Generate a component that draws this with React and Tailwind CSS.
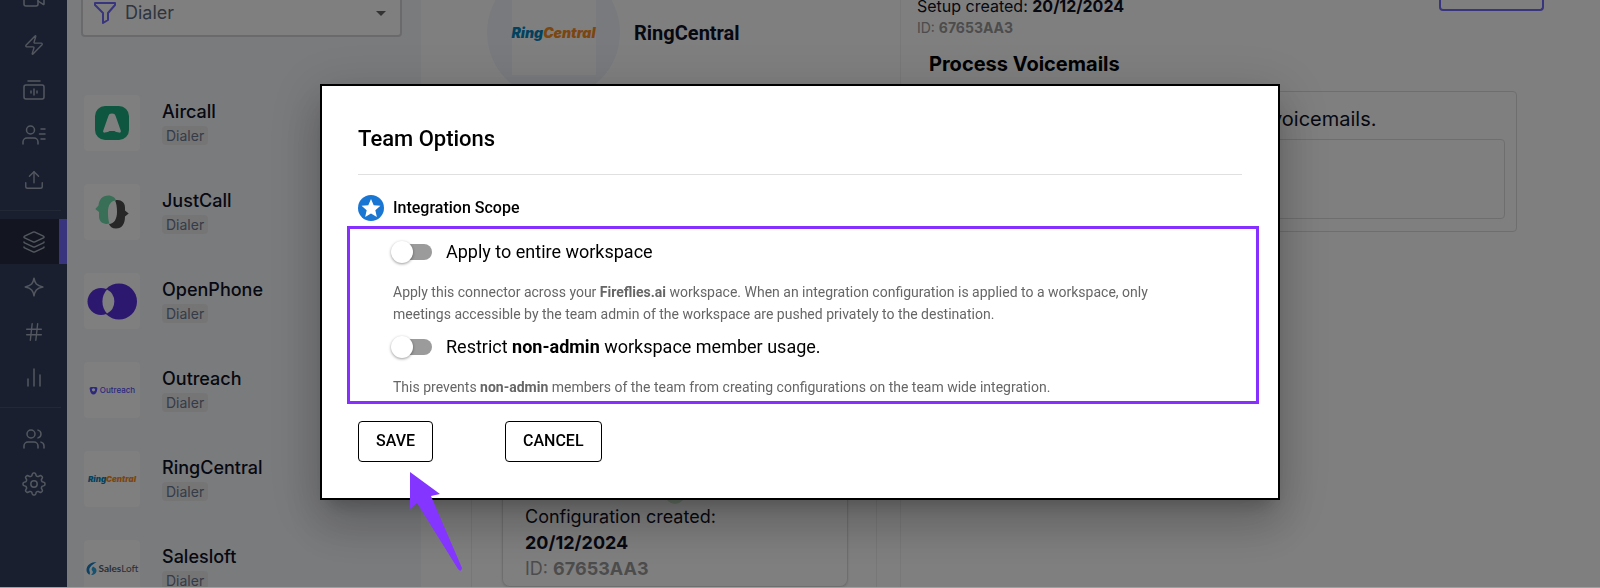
import { useState } from "react";
import { Zap, Upload, Layers, Hash, Users, Video } from "lucide-react";

const dialers = [
  { name: "Aircall", Logo: AircallLogo },
  { name: "JustCall", Logo: JustCallLogo },
  { name: "OpenPhone", Logo: OpenPhoneLogo },
  { name: "Outreach", Logo: OutreachLogo },
  { name: "RingCentral", Logo: RingCentralLogo },
  { name: "Salesloft", Logo: SalesLoftLogo },
];

function AircallLogo() {
  return (
    <svg viewBox="0 0 34 34" className="w-[34px]" aria-hidden="true">
      <rect width="34" height="34" rx="10" fill="#1eac80" />
      <path d="M17 7.500c-2.200 0-3 .8-3.600 2.500L8.300 24.500c-.6 1.600.4 2.400 1.600 2.100l2.600-.6c1-.2 1.600-.9 2.600-.9h3.800c1 0 1.600.7 2.600.9l2.600.6c1.200.3 2.200-.5 1.600-2.100L20.600 10c-.6-1.700-1.400-2.500-3.600-2.500z" fill="#fff" />
    </svg>
  );
}

function JustCallLogo() {
  return (
    <svg viewBox="0 0 34 34" className="w-[34px]" aria-hidden="true">
      <path d="M20 5.500c5-1.500 10 1.500 10 7v3l3.700 3-3.700 3C30 29 27 33.500 21 33.500c-4 0-6-2-7-4.500 5 0 8-5 8-12 0-5-.5-8.500-2-11.500z" fill="#4e4e4e" />
      <path d="M13 .5c4.500 0 7.500 2.500 8 5-5 0-8 4.500-8 11.500 0 5 .3 8.500 1.500 11.500-6 1.500-10.500-1.500-10.500-7V17L.3 14l3.200-3.500C4 4 8 .5 13 .5z" fill="#72dcae" />
    </svg>
  );
}

function OpenPhoneLogo() {
  return (
    <svg viewBox="0 0 50 37" className="w-[50px]" aria-hidden="true">
      <circle cx="14" cy="18.500" r="13.500" fill="#5b30e0" />
      <circle cx="32" cy="18.500" r="18" fill="#5b30e0" />
      <path d="M20 6.500a13.500 13.500 0 0 1 0 24 18 18 0 0 1 0-24z" fill="#fff" />
    </svg>
  );
}

function OutreachLogo() {
  return (
    <span className="flex items-center gap-[2px] text-[8px] font-medium text-[#5951ff]">
      <svg viewBox="0 0 10 10" className="w-[9px]" aria-hidden="true">
        <path d="M2.500 1h5C9 1 9.500 2 9.200 3.500 8.800 7 7 9.500 5 9.500S1.200 7 .8 3.500C.5 2 1 1 2.500 1z" fill="#5951ff" />
        <circle cx="5" cy="4.300" r="1.800" fill="#fff" />
      </svg>
      Outreach
    </span>
  );
}

function RingCentralLogo() {
  return (
    <span className="text-[8px] font-black italic text-[#f78c1e]">
      <span className="text-[#0684bd]">Ring</span>Central
    </span>
  );
}

function SalesLoftLogo() {
  return (
    <span className="flex items-center gap-[2px] font-['Lato'] text-[10px] text-[#54616c]">
      <svg viewBox="0 0 11 13" className="w-[11px]" aria-hidden="true">
        <path d="M10.500 0C5 0 .5 3 .5 8c0 2.500 1.500 4 3 4.700C5 10 2 8.500 4 5.500 5.500 3 8 2 10.500 0z" fill="#1a80c4" />
        <path d="M7 4.500c-2 2-1.500 3.500-.5 4.500S6.500 12 5 13c3.500 0 5.500-2 5.500-4.500S8.500 5.500 7 4.500z" fill="#2fa4e0" />
      </svg>
      <span><b>Sales</b>Loft</span>
    </span>
  );
}

function LibraryIcon() {
  return (
    <svg viewBox="0 0 24 24" className="size-6" fill="none" stroke="currentColor" strokeWidth="1.500" strokeLinecap="round" aria-hidden="true">
      <path d="M6 3h12" />
      <rect x="2" y="7" width="20" height="14" rx="2" />
      <path d="M9 13v2M12 11v6M15 13v2" />
    </svg>
  );
}

function ContactIcon() {
  return (
    <svg viewBox="0 0 24 24" className="size-6" fill="none" stroke="currentColor" strokeWidth="1.500" strokeLinecap="round" aria-hidden="true">
      <circle cx="8.500" cy="7" r="4" />
      <path d="M1 21v-2a4 4 0 0 1 4-4h7a4 4 0 0 1 4 4v2M19 6h4M17.500 11H23M19 16h4" />
    </svg>
  );
}

function SparkIcon() {
  return (
    <svg viewBox="0 0 24 24" className="size-6" fill="none" stroke="currentColor" strokeWidth="1.500" strokeLinejoin="round" aria-hidden="true">
      <path d="M12 3.200c.9 5.300 2.500 7.500 8.800 8.800-6.300 1.300-7.900 3.500-8.800 8.800-.9-5.300-2.500-7.500-8.800-8.800C9.500 10.700 11.100 8.500 12 3.200z" />
    </svg>
  );
}

function BarsIcon() {
  return (
    <svg viewBox="0 0 24 24" className="size-6" fill="none" stroke="currentColor" strokeWidth="1.500" strokeLinecap="round" aria-hidden="true">
      <path d="M6 14v7M12 4v17M18 10v11" />
    </svg>
  );
}

// eight rounded teeth round the hub
const gearPoints = Array.from({ length: 96 }, (_, i) => {
  const a = (i / 96) * Math.PI * 2;
  const r = 9.6 + 1.4 * Math.tanh(2 * Math.cos(8 * a));
  return `${(12 + r * Math.sin(a)).toFixed(2)},${(12 - r * Math.cos(a)).toFixed(2)}`;
}).join(" ");

function GearIcon() {
  return (
    <svg viewBox="0 0 24 24" className="size-6" fill="none" stroke="currentColor" strokeWidth="1.500" strokeLinejoin="round" aria-hidden="true">
      <polygon points={gearPoints} />
      <circle cx="12" cy="12" r="3.200" />
    </svg>
  );
}

function NavItem({ label, active, children }) {
  return (
    <a
      href="#"
      aria-label={label}
      className={
        active
          ? "flex h-[45px] items-center justify-center border-r-8 border-[#7069fa] bg-[#262d40] pl-2"
          : "flex h-[45px] items-center justify-center"
      }
    >
      {children}
    </a>
  );
}

function Sidebar() {
  return (
    <nav className="-mt-[23px] flex w-[67px] shrink-0 flex-col bg-[#343f60] text-[#a6afbe]">
      <NavItem label="Meetings"><Video className="size-6" strokeWidth={1.5} /></NavItem>
      <NavItem label="Automations"><Zap className="size-[22px]" strokeWidth={1.5} /></NavItem>
      <NavItem label="Library"><LibraryIcon /></NavItem>
      <NavItem label="Contacts"><ContactIcon /></NavItem>
      <NavItem label="Uploads"><Upload className="size-[22px]" strokeWidth={1.5} /></NavItem>
      <div className="my-2 mr-[6px] h-px bg-[#46506c]" />
      <NavItem label="Integrations" active><Layers className="size-6" strokeWidth={1.5} /></NavItem>
      <NavItem label="Apps"><SparkIcon /></NavItem>
      <NavItem label="Topics"><Hash className="size-[22px]" strokeWidth={1.5} /></NavItem>
      <NavItem label="Analytics"><BarsIcon /></NavItem>
      <div className="my-2 mr-[6px] h-px bg-[#46506c]" />
      <NavItem label="Team"><Users className="size-6" strokeWidth={1.5} /></NavItem>
      <NavItem label="Settings"><GearIcon /></NavItem>
    </nav>
  );
}

function DialerList() {
  return (
    <section className="w-[354px] shrink-0 bg-[#f5f7fb]">
      <div className="ml-[14px] -mt-[11px] flex h-12 w-[321px] items-center gap-2 rounded border-2 border-[#d4d5d8] bg-white px-[10px]">
        <svg viewBox="0 0 24 24" className="size-6" fill="none" stroke="#7069fa" strokeWidth="2" strokeLinejoin="round" aria-hidden="true">
          <path d="M2 2h20v2l-7 8v7l-5 3V12L2 4z" />
        </svg>
        <select aria-label="Category" className="grow appearance-none text-lg text-[#5d6a80]">
          <option>Dialer</option>
        </select>
        <svg viewBox="0 0 10 5" className="mr-1 w-[10px]" aria-hidden="true"><path d="M0 0h10L5 5z" fill="#666" /></svg>
      </div>
      <ul className="mt-[58px] ml-[17px] flex flex-col gap-[33px]">
        {dialers.map(({ name, Logo }) => (
          <li key={name} className="flex h-14 items-center gap-[22px]">
            <span className="flex size-14 shrink-0 items-center justify-center rounded bg-white">
              <Logo />
            </span>
            <span className="flex flex-col items-start pb-1">
              <span className="text-lg leading-7 font-medium text-[#0d1024]">{name}</span>
              <span className="rounded bg-[#ebebed] px-1 text-sm leading-[19px] text-[#6b7890]">Dialer</span>
            </span>
          </li>
        ))}
      </ul>
    </section>
  );
}

function Page() {
  return (
    <div className="flex h-full overflow-hidden bg-white">
      <Sidebar />
      <DialerList />
      <section className="flex w-[480px] shrink-0 flex-col justify-between border-r border-[#f0f0f0]">
        <div className="-mt-[34px] ml-[66px] flex items-center gap-[14px]">
          <div className="flex size-[133px] items-center justify-center rounded-full bg-[#f3f5fa]">
            <div className="flex size-[84px] items-center justify-center bg-white">
              <span className="text-sm font-black italic text-[#f78c1e]">
                <span className="text-[#0684bd]">Ring</span>Central
              </span>
            </div>
          </div>
          <h1 className="font-['Roboto'] text-xl font-bold text-[#0d1024]">RingCentral</h1>
        </div>
        <div className="mr-[23px] ml-[50px] border-x border-[#eee] pl-[30px]">
          <div className="mr-7 rounded-b-lg border border-t-0 border-[#ddd] px-[22px] pb-1 text-lg leading-[26px] text-[#0d1024] shadow-sm">
            <div className="mx-auto size-5 rounded-full bg-[#cfe8cf]" />
            <p>Configuration created:</p>
            <p className="font-bold">20/12/2024</p>
            <p className="text-[#999]">ID: <b>67653AA3</b></p>
          </div>
        </div>
      </section>
      <section className="grow pl-4 text-[#0d1024]">
        <div className="flex justify-between pr-14">
          <div>
            <p className="-mt-[5px] text-base leading-[22px]">Setup created: <b>20/12/2024</b></p>
            <p className="text-sm leading-[22px] text-[#999]">ID: <b>67653AA3</b></p>
          </div>
          <button className="h-[11px] w-[105px] rounded-b border-2 border-t-0 border-[#7069fa]" aria-label="Edit" />
        </div>
        <h2 className="mt-[9px] ml-3 text-xl leading-8 font-bold text-black">Process Voicemails</h2>
        <div className="mt-[11px] mr-[83px] rounded border border-[#ddd] px-[11px] pt-[6px] pb-3">
          <p className="flex h-[41px] items-center pl-[342px] text-xl">voicemails.</p>
          <div className="h-20 rounded border border-[#ddd]" />
        </div>
      </section>
    </div>
  );
}

function Switch({ id, checked, onChange, children }) {
  return (
    <label htmlFor={id} className="flex items-center gap-[14px] text-lg leading-7 text-black">
      <span className="relative flex h-6 w-[39px] items-center">
        <input id={id} type="checkbox" role="switch" checked={checked} onChange={onChange} className="peer sr-only" />
        <span className="h-4 w-full rounded-full bg-[#9b9b9b] peer-checked:bg-blue-400" />
        <span className="absolute -left-[2px] size-[22px] rounded-full bg-white shadow-[0_1px_3px_rgba(0,0,0,0.4)] peer-checked:left-5" />
      </span>
      <span>{children}</span>
    </label>
  );
}

function TeamOptions() {
  const [workspace, setWorkspace] = useState(false);
  const [restrict, setRestrict] = useState(false);

  return (
    <div
      role="dialog"
      aria-labelledby="team-options"
      className="w-3/5 border-2 border-black bg-white p-9 font-['Roboto',sans-serif] text-black shadow-[0_12px_17px_-8px_rgba(0,0,0,0.2),0_26px_42px_3px_rgba(0,0,0,0.14),0_10px_50px_9px_rgba(0,0,0,0.12)]"
    >
      <h2 id="team-options" className="border-b border-[#e0e0e0] pb-[18px] text-[22px] leading-[34px] font-medium">Team Options</h2>
      <div className="mt-5 flex items-center gap-[9px]">
        <svg viewBox="0 0 24 24" className="size-[26px]" aria-hidden="true">
          <circle cx="12" cy="12" r="12" fill="#1976d2" />
          <path d="M12 3.600l2.500 5.800 6.200.5-4.700 4.200 1.400 6.100-5.400-3.200-5.400 3.200L8 14.100 3.300 9.900l6.200-.5z" fill="#fff" />
        </svg>
        <h3 className="text-base font-medium">Integration Scope</h3>
      </div>
      <div className="-mr-[17px] -ml-[11px] mt-[5px] border-[3px] border-[#862fff] pt-[9px] pr-[60px] pb-[3px] pl-[43px] text-sm leading-[22px] text-[#666]">
        <Switch id="apply" checked={workspace} onChange={() => setWorkspace(!workspace)}>Apply to entire workspace</Switch>
        <p className="mt-[15px] mb-2">
          Apply this connector across your <b>Fireflies.ai</b> workspace. When an integration configuration is applied to a workspace, only
          meetings accessible by the team admin of the workspace are pushed privately to the destination.
        </p>
        <Switch id="restrict" checked={restrict} onChange={() => setRestrict(!restrict)}>
          Restrict <b>non-admin</b> workspace member usage.
        </Switch>
        <p className="mt-[15px]">
          This prevents <b>non-admin</b> members of the team from creating configurations on the team wide integration.
        </p>
      </div>
      <div className="relative mt-[17px] flex gap-[72px] text-base font-medium">
        <button className="h-[41px] rounded border border-black px-[17px]">SAVE</button>
        <button className="h-[41px] rounded border border-black px-[17px]">CANCEL</button>
        <svg viewBox="0 0 54 102" className="absolute top-[50px] left-[51px] w-[54px]" aria-hidden="true">
          <path d="M1 1l30 22-9 2 31 72q-1 5-4 1L8 32l-7 6z" fill="#8435ff" />
        </svg>
      </div>
    </div>
  );
}

export default function App() {
  return (
    <main className="h-screen overflow-hidden border-b border-[#a0a0a0] font-['Inter',sans-serif]">
      <Page />
      <div className="fixed inset-x-0 top-0 bottom-px flex items-center justify-center bg-black/50 pb-1">
        <TeamOptions />
      </div>
    </main>
  );
}
